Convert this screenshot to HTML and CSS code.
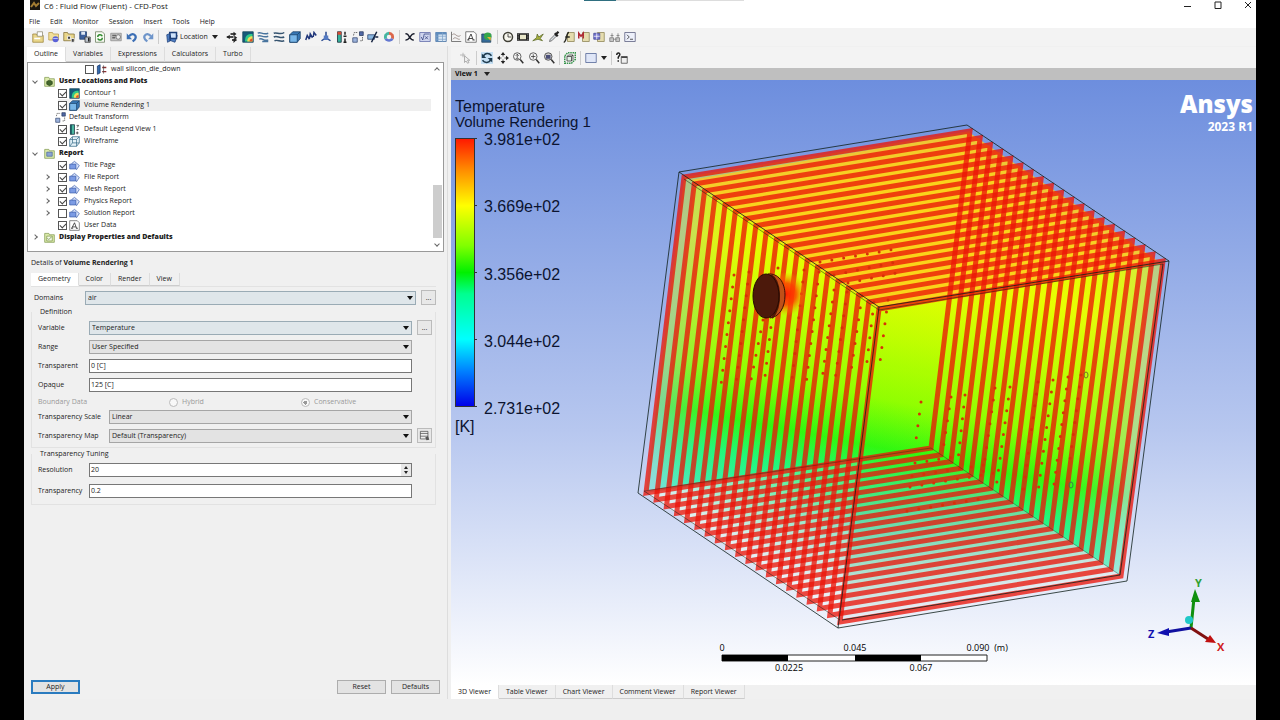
FILE: index.html
```html
<!DOCTYPE html>
<html lang="en">
<head>
<meta charset="utf-8">
<title>C6 : Fluid Flow (Fluent) - CFD-Post</title>
<link rel="stylesheet" href="styles.css">
</head>
<body>
<svg class="sprite" aria-hidden="true">
  <symbol id="i-folder" viewBox="0 0 16 16"><path d="M1 4h5l1 2h8v9H1z" fill="#e9d68a" stroke="#9a8238"/><path d="M7 1h7v6H7z" fill="#fff" stroke="#8d8a70"/><path d="M3 10h8" stroke="#fff" stroke-width="2"/></symbol>
  <symbol id="i-folderball" viewBox="0 0 16 16"><path d="M1 2h5l1 2h7v8H1z" fill="#f2e09a" stroke="#b89a4a"/><circle cx="10" cy="11" r="4" fill="#5a62d8"/><path d="M7 10h6" stroke="#d9dcff"/></symbol>
  <symbol id="i-foldersim" viewBox="0 0 16 16"><path d="M1 2h5l1 2h8v9H1z" fill="#e9d68a" stroke="#7f6d35"/><path d="M6 7h4v4H6zM11 10h4v5h-4z" fill="#444" stroke="#fff"/></symbol>
  <symbol id="i-save" viewBox="0 0 16 16"><path d="M1 1h9v10H1z" fill="#3c5f9c" stroke="#24406e"/><path d="M3 1h5v4H3z" fill="#dfe8f5"/><path d="M8 8h7v7H8z" fill="#bcc3cc" stroke="#333"/><path d="M13 9v5" stroke="#222" stroke-width="2"/></symbol>
  <symbol id="i-refresh" viewBox="0 0 16 16"><path d="M2 1h9l3 3v11H2z" fill="#f7fbf2" stroke="#667a5a"/><path d="M5 8c0-4 5-4 6-1M11 9c0 4-5 4-6 1" fill="none" stroke="#2f8a2f" stroke-width="2"/></symbol>
  <symbol id="i-camera" viewBox="0 0 16 16"><path d="M1 3h14v10H1z" fill="#c4c4c4" stroke="#8b8b8b"/><path d="M3 6h5M3 9h4" stroke="#666" stroke-width="2"/><circle cx="11" cy="8" r="3" fill="#eee" stroke="#666"/></symbol>
  <symbol id="i-undo" viewBox="0 0 16 16"><path d="M4 7c5-6 11-1 8 4l-3 3" fill="none" stroke="#3d6fb5" stroke-width="3"/><path d="M1 3v8h7z" fill="#3d6fb5"/></symbol>
  <symbol id="i-redo" viewBox="0 0 16 16"><path d="M12 7C7 1 1 6 4 11l3 3" fill="none" stroke="#6e95ca" stroke-width="3"/><path d="M15 3v8H8z" fill="#6e95ca"/></symbol>
  <symbol id="i-location" viewBox="0 0 16 16"><path d="M1 5l5-2v10l-4 2zM6 4l9 2-3 9-8-3z" fill="#4f7fc4" stroke="#1d3f78"/><path d="M5 2h9v8H6z" fill="#cfe3fb" stroke="#1d3f78" stroke-width="2"/></symbol>
  <symbol id="i-vector" viewBox="0 0 16 16"><path d="M1 8h9M6 4h5M8 12h6" stroke="#111" stroke-width="2"/><path d="M5 5l-4 3 4 3zM10 1l4 3-4 3zM11 6l4 3-4 3zM10 10l4 2-4 4z" fill="#222"/></symbol>
  <symbol id="i-contour" viewBox="0 0 16 16"><path d="M1 1h14v14H1z" fill="#155b7a" stroke="#124358"/><path d="M4 14c0-8 3-10 10-10v10z" fill="#2fc98a"/><path d="M7 14c0-5 3-7 7-7v7z" fill="#f1dc57"/><path d="M10 14c0-3 2-4 4-4v4z" fill="#e0522c"/></symbol>
  <symbol id="i-stream" viewBox="0 0 16 16"><path d="M1 3c4-3 6 3 14 0M1 7c4-3 6 3 14 0M3 11c4-3 5 3 12 1M7 14h8" fill="none" stroke="#48749e" stroke-width="2"/></symbol>
  <symbol id="i-particle" viewBox="0 0 16 16"><path d="M1 3c4-2 8 3 14-1M1 8c5-3 8 3 14 0M2 13c4-2 8 2 13 0" fill="none" stroke="#35536f" stroke-width="2"/></symbol>
  <symbol id="i-cube" viewBox="0 0 16 16"><path d="M1 5l4-4h10v9l-4 5H1z" fill="#3777b5" stroke="#173d64"/><path d="M1 5h10v10H1z" fill="#78b6e8" stroke="#173d64"/><path d="M11 5l4-4" stroke="#173d64"/></symbol>
  <symbol id="i-text" viewBox="0 0 16 16"><path d="M1 12l2-6 3 5M6 10l1-6 3 5M11 8l1-6 3 4" fill="none" stroke="#20367a" stroke-width="2"/></symbol>
  <symbol id="i-coord" viewBox="0 0 16 16"><path d="M8 1v8l6 4M8 9l-6 4" stroke="#25478e" stroke-width="2" fill="none"/><path d="M5 6h6v6H5z" fill="#547ac2"/></symbol>
  <symbol id="i-legend" viewBox="0 0 16 16"><path d="M2 1h5v14H2z" fill="#35b39c" stroke="#123"/><path d="M2 1h5v4H2z" fill="#d24a35"/><path d="M12 1v4M10 7h4M12 10v5M10 15h4" stroke="#222" stroke-width="2"/></symbol>
  <symbol id="i-legendgreen" viewBox="0 0 16 16"><path d="M2 1h6v14H2z" fill="#49b8a0" stroke="#123"/><path d="M2 1h2v14H2z" fill="#154c58"/><path d="M11 2h3l-2 3M11 8h3M12 11v4M10 13h4" fill="none" stroke="#222"/></symbol>
  <symbol id="i-transform" viewBox="0 0 16 16"><path d="M1 9h6v6H1z" fill="#9db3dc" stroke="#34466f"/><path d="M10 1h5v5h-5z" fill="#5068a5" stroke="#26385e"/><path d="M2 6l1-4h5M14 8v5h-4" fill="none" stroke="#444" stroke-dasharray="2 1"/></symbol>
  <symbol id="i-clip" viewBox="0 0 16 16"><path d="M1 5h9v6H1z" fill="#8ab7df" stroke="#243d6d"/><path d="M13 1L6 15M11 8h4" stroke="#14223f" stroke-width="2"/></symbol>
  <symbol id="i-wheel" viewBox="0 0 16 16"><path d="M8 8V1a7 7 0 0 1 6 10z" fill="#dc674b"/><path d="M8 8l6 3a7 7 0 0 1-12 0z" fill="#6478d1"/><path d="M8 8L2 11A7 7 0 0 1 8 1z" fill="#44b5a0"/><circle cx="8" cy="8" r="3" fill="#f2f2f2"/></symbol>
  <symbol id="i-x" viewBox="0 0 16 16"><path d="M2 4c5-2 5 9 11 8M14 4C9 2 8 13 2 12" fill="none" stroke="#181c2b" stroke-width="2"/></symbol>
  <symbol id="i-fx" viewBox="0 0 16 16"><path d="M1 2h14v12H1z" fill="#cfd5ee" stroke="#5b67a5"/><path d="M3 8l2 4 2-8h7M8 7l4 4M12 7l-4 4" fill="none" stroke="#31407f"/></symbol>
  <symbol id="i-table" viewBox="0 0 16 16"><path d="M1 2h14v12H1z" fill="#d8e7f5" stroke="#3c6a9d"/><path d="M1 3h14M3 2v12" stroke="#5f8cbd" stroke-width="3"/><path d="M1 7h14M1 11h14M10 2v12" stroke="#7fa3c8"/></symbol>
  <symbol id="i-chart" viewBox="0 0 16 16"><path d="M2 1v13h13" fill="none" stroke="#555"/><path d="M3 5c4-4 6 5 11 1M4 11c3-5 6 1 9 0" fill="none" stroke="#8b7a74"/></symbol>
  <symbol id="i-a" viewBox="0 0 16 16"><path d="M1 1h11l3 3v11H1z" fill="#fff" stroke="#555"/><path d="M4 12L8 4l3 8M5 10h5M3 12h3M10 12h3" fill="none" stroke="#111"/></symbol>
  <symbol id="i-figure" viewBox="0 0 16 16"><path d="M1 4h12v11H1z" fill="#356b99" stroke="#23405c"/><circle cx="9" cy="7" r="5" fill="#35a74b"/><path d="M8 8h5v5z" fill="#e1b635"/></symbol>
  <symbol id="i-clock" viewBox="0 0 16 16"><circle cx="8" cy="8" r="6" fill="#f7f6ee" stroke="#403f36" stroke-width="2"/><path d="M8 4v4h4" fill="none" stroke="#222"/></symbol>
  <symbol id="i-film" viewBox="0 0 16 16"><path d="M0 3h16v10H0z" fill="#222"/><path d="M4 5h8v6H4z" fill="#e8e6c9"/><path d="M1 5h1M1 8h1M1 11h1M14 5h1M14 8h1M14 11h1" stroke="#fff"/></symbol>
  <symbol id="i-quick" viewBox="0 0 16 16"><path d="M1 13l5-4 1-5 2 4 6-4-4 6 3 3-6-2z" fill="#a8b13c" stroke="#5c6a2a"/></symbol>
  <symbol id="i-probe" viewBox="0 0 16 16"><path d="M2 14l1-3 6-6 2 2-6 6z" fill="#d6dde2" stroke="#555"/><path d="M9 3l4 4M11 4l3-3" stroke="#222" stroke-width="3"/></symbol>
  <symbol id="i-func" viewBox="0 0 16 16"><path d="M6 2h9v12H6z" fill="#e5dcae" stroke="#8b8150"/><path d="M1 15c4 0 3-13 7-13M3 8h6" fill="none" stroke="#282820" stroke-width="2"/></symbol>
  <symbol id="i-macro" viewBox="0 0 16 16"><path d="M6 2h9v12H6z" fill="#e5dcae" stroke="#8b8150"/><path d="M1 10V3l3 4 3-4v7" fill="none" stroke="#b02b35" stroke-width="2"/></symbol>
  <symbol id="i-mesh" viewBox="0 0 16 16"><path d="M6 2h9v12H6z" fill="#e5dcae" stroke="#8b8150"/><path d="M1 3h8v8H1z" fill="#7273cf" stroke="#414590"/><path d="M1 7h8M5 3v8" stroke="#fff"/></symbol>
  <symbol id="i-compare" viewBox="0 0 16 16"><path d="M1 9h5v5H1zM9 9h5v5H9z" fill="#c7c7c7" stroke="#777"/><path d="M4 9V3M12 9V3M6 11h4M2 6h4M10 6h4" stroke="#777"/></symbol>
  <symbol id="i-console" viewBox="0 0 16 16"><path d="M1 2h14v12H1z" fill="#edf0fa" stroke="#55587a"/><path d="M4 5l3 3-3 3M8 11h4" fill="none" stroke="#222"/></symbol>
  <symbol id="i-select" viewBox="0 0 16 16"><path d="M6 5v9l2-2 2 3 2-1-2-3h3z" fill="#eee" stroke="#999"/><path d="M0 4h7M4 1v6" stroke="#aaa"/></symbol>
  <symbol id="i-rotate" viewBox="0 0 16 16"><path d="M3 6c2-5 8-5 11-1M13 10c-2 5-8 5-11 1" fill="none" stroke="#1e3a4d" stroke-width="2"/><path d="M1 2v6h6zM15 14V8H9z" fill="#1e3a4d"/></symbol>
  <symbol id="i-pan" viewBox="0 0 16 16"><path d="M8 0l3 4H5zM8 16l3-4H5zM0 8l4-3v6zM16 8l-4-3v6z" fill="#222"/><path d="M8 4v2M8 10v2M4 8h2M10 8h2" stroke="#222"/></symbol>
  <symbol id="i-zoom" viewBox="0 0 16 16"><circle cx="7" cy="6" r="5" fill="#f5f5f5" stroke="#333"/><path d="M11 10l4 5" stroke="#333" stroke-width="2"/><path d="M7 3v6M5 5l2-2 2 2M5 8l2 2 2-2" stroke="#333" fill="none"/></symbol>
  <symbol id="i-zoombox" viewBox="0 0 16 16"><circle cx="7" cy="6" r="5" fill="#f5f5f5" stroke="#333"/><path d="M11 10l4 5" stroke="#333" stroke-width="2"/><path d="M7 3v6M4 6h6" stroke="#333"/></symbol>
  <symbol id="i-fit" viewBox="0 0 16 16"><circle cx="7" cy="6" r="5" fill="#ccc" stroke="#333"/><path d="M4 4h6v5H4z" fill="#4b4f78"/><path d="M11 10l4 5" stroke="#333" stroke-width="2"/></symbol>
  <symbol id="i-highlight" viewBox="0 0 16 16"><path d="M1 5l4-4h10v9l-5 5H1z" fill="none" stroke="#35924a" stroke-width="2" stroke-dasharray="2 1"/><path d="M4 6h6v6H4zM4 6l2-2h6v6l-2 2M10 6l2-2" fill="#e4f0e8" stroke="#333"/></symbol>
  <symbol id="i-viewport" viewBox="0 0 16 16"><path d="M1 2h14v12H1z" fill="#dfe6f7" stroke="#4b5f91"/></symbol>
  <symbol id="i-help" viewBox="0 0 16 16"><path d="M1 4c0-4 5-3 4 0L3 7v2M3 11v2" fill="none" stroke="#222" stroke-width="2"/><path d="M7 6h8v9H7z" fill="#eee" stroke="#444"/><path d="M7 7h8" stroke="#444" stroke-width="2"/></symbol>
  <symbol id="i-group" viewBox="0 0 16 16"><path d="M1 2h6l1 2h7v11H1z" fill="#dcebab" stroke="#799346"/><path d="M4 8l4-2 4 2v4l-4 2-4-2z" fill="#43662b" stroke="#26401a"/></symbol>
  <symbol id="i-reportgroup" viewBox="0 0 16 16"><path d="M1 2h6l1 2h7v11H1z" fill="#dcebab" stroke="#799346"/><path d="M4 6h8v6H4z" fill="#8ba4d2" stroke="#4a649b"/></symbol>
  <symbol id="i-displaygroup" viewBox="0 0 16 16"><path d="M1 2h6l1 2h7v11H1z" fill="#dcebab" stroke="#799346"/><path d="M4 6h8v7H4z" fill="#f5fae8" stroke="#799346"/><path d="M5 9l2 2 4-4" fill="none" stroke="#587a34"/></symbol>
  <symbol id="i-wall" viewBox="0 0 16 16"><path d="M2 3l4-2v12l-4 2z" fill="#356cae" stroke="#152f63"/><path d="M9 5h6M9 11h6" stroke="#8d3134" stroke-width="2"/><path d="M11 2v12" stroke="#444"/></symbol>
  <symbol id="i-wire" viewBox="0 0 16 16"><path d="M1 5l4-4h10v9l-4 5H1zM1 5h10v10M11 5l4-4M5 1v9h10M5 10l-4 5" fill="#e4f2f8" stroke="#2c6382"/></symbol>
  <symbol id="i-page" viewBox="0 0 16 16"><path d="M4 5l4-3 7 6-4 6z" fill="#dbe5fb" stroke="#3558a8"/><path d="M1 6h9v7H1z" fill="#7b9be4" stroke="#3558a8"/></symbol>
  <symbol id="i-edit" viewBox="0 0 16 16"><path d="M2 2h11v11H2zM2 5h11M2 9h11" fill="#eee" stroke="#444"/><path d="M9 11l4-2 2 5-4 1z" fill="#555"/></symbol>
</svg>

<div class="app">
  <header class="titlebar">
    <svg class="appicon" viewBox="0 0 10 10"><path d="M0 0h10v10H0z" fill="#1b1710"/><path d="M1 7l3-4 2 3 3-3" fill="none" stroke="#a57e33" stroke-width="2"/></svg>
    <h1 class="title">C6 : Fluid Flow (Fluent) - CFD-Post</h1>
    <span class="progress"></span>
    <div class="winbtns">
      <button aria-label="Minimize"><svg viewBox="0 0 8 8"><path d="M0 5h7v1H0z" fill="#222"/></svg></button>
      <button aria-label="Maximize"><svg viewBox="0 0 16 16"><path d="M2 2h12v13H2z" fill="none" stroke="#222" stroke-width="2"/></svg></button>
      <button aria-label="Close"><svg viewBox="0 0 8 8"><path d="M1 1l6 6M7 1L1 7" stroke="#222"/></svg></button>
    </div>
  </header>
  <nav class="menubar">
    <button>File</button><button>Edit</button><button>Monitor</button><button>Session</button><button>Insert</button><button>Tools</button><button>Help</button>
  </nav>
  <div class="toolbar">
    <div class="tools t-file" data-icons="folder folderball foldersim save refresh camera"></div>
    <div class="tools t-undo" data-icons="undo redo"></div>
    <i class="sep"></i>
    <button class="location"><svg><use href="#i-location"/></svg>Location<i class="tri"></i></button>
    <div class="tools t-plot" data-icons="vector contour stream particle cube"></div>
    <div class="tools t-obj" data-icons="text coord legend transform clip wheel"></div>
    <i class="sep"></i>
    <div class="tools t-calc" data-icons="x fx table chart a figure"></div>
    <i class="sep"></i>
    <div class="tools t-util" data-icons="clock film quick probe func macro mesh compare console"></div>
  </div>

  <main class="work">
    <section class="left">
      <div class="tabs main-tabs" role="tablist">
        <button class="tab on" role="tab">Outline</button><button class="tab" role="tab">Variables</button><button class="tab" role="tab">Expressions</button><button class="tab" role="tab">Calculators</button><button class="tab" role="tab">Turbo</button>
      </div>
      <div class="treebox">
        <ul class="tree">
          <li class="row deep"><label><input type="checkbox"><svg><use href="#i-wall"/></svg>wall silicon_die_down</label></li>
          <li class="row group"><i class="chev open"></i><svg><use href="#i-group"/></svg><b>User Locations and Plots</b></li>
          <li class="row item"><i class="chev none"></i><label><input type="checkbox" checked><svg><use href="#i-contour"/></svg>Contour 1</label></li>
          <li class="row item sel"><i class="chev none"></i><label><input type="checkbox" checked><svg><use href="#i-cube"/></svg>Volume Rendering 1</label></li>
          <li class="row item"><i class="chev none"></i><svg class="bare"><use href="#i-transform"/></svg>Default Transform</li>
          <li class="row item"><i class="chev none"></i><label><input type="checkbox" checked><svg><use href="#i-legendgreen"/></svg>Default Legend View 1</label></li>
          <li class="row item"><i class="chev none"></i><label><input type="checkbox" checked><svg><use href="#i-wire"/></svg>Wireframe</label></li>
          <li class="row group"><i class="chev open"></i><svg><use href="#i-reportgroup"/></svg><b>Report</b></li>
          <li class="row item"><i class="chev none"></i><label><input type="checkbox" checked><svg><use href="#i-page"/></svg>Title Page</label></li>
          <li class="row item"><i class="chev"></i><label><input type="checkbox" checked><svg><use href="#i-page"/></svg>File Report</label></li>
          <li class="row item"><i class="chev"></i><label><input type="checkbox" checked><svg><use href="#i-page"/></svg>Mesh Report</label></li>
          <li class="row item"><i class="chev"></i><label><input type="checkbox" checked><svg><use href="#i-page"/></svg>Physics Report</label></li>
          <li class="row item"><i class="chev"></i><label><input type="checkbox"><svg><use href="#i-page"/></svg>Solution Report</label></li>
          <li class="row item"><i class="chev none"></i><label><input type="checkbox" checked><svg><use href="#i-a"/></svg>User Data</label></li>
          <li class="row group"><i class="chev"></i><svg><use href="#i-displaygroup"/></svg><b>Display Properties and Defaults</b></li>
        </ul>
        <div class="scroll"><i class="chev up"></i><span class="thumb"></span><i class="chev open"></i></div>
      </div>
      <h2 class="details">Details of <b>Volume Rendering 1</b></h2>
      <div class="tabs sub-tabs" role="tablist">
        <button class="tab on" role="tab">Geometry</button><button class="tab" role="tab">Color</button><button class="tab" role="tab">Render</button><button class="tab" role="tab">View</button>
      </div>
      <form class="form">
        <div class="line domains"><label for="domains">Domains</label><span class="pick blue"><select id="domains"><option>air</option></select></span><button type="button" class="more">...</button></div>
        <fieldset class="definition">
          <legend>Definition</legend>
          <div class="line"><label for="variable">Variable</label><span class="pick blue"><select id="variable"><option>Temperature</option></select></span><button type="button" class="more">...</button></div>
          <div class="line"><label for="range">Range</label><span class="pick"><select id="range"><option>User Specified</option></select></span></div>
          <div class="line"><label for="transparent">Transparent</label><input class="text" id="transparent" value="0 [C]"></div>
          <div class="line"><label for="opaque">Opaque</label><input class="text" id="opaque" value="125 [C]"></div>
          <div class="line radios"><span>Boundary Data</span><label><input type="radio" name="bd" disabled>Hybrid</label><label><input type="radio" name="bd" checked disabled>Conservative</label></div>
          <div class="line wide"><label for="scale">Transparency Scale</label><span class="pick"><select id="scale"><option>Linear</option></select></span></div>
          <div class="line wide"><label for="map">Transparency Map</label><span class="pick"><select id="map"><option>Default (Transparency)</option></select></span><button type="button" class="more" aria-label="Edit map"><svg><use href="#i-edit"/></svg></button></div>
        </fieldset>
        <fieldset class="tuning">
          <legend>Transparency Tuning</legend>
          <div class="line"><label for="res">Resolution</label><span class="spin"><input class="text" id="res" value="20"><span class="arrows"><i class="tri flip"></i><i class="tri"></i></span></span></div>
          <div class="line"><label for="transp">Transparency</label><input class="text" id="transp" value="0.2"></div>
        </fieldset>
      </form>
      <div class="actions"><button class="btn primary">Apply</button><span class="gap"></span><button class="btn">Reset</button><button class="btn">Defaults</button></div>
    </section>

    <section class="right">
      <div class="toolbar viewbar">
        <div class="tools t-one" data-icons="select"></div>
        <i class="sep"></i>
        <div class="tools t-nav" data-icons="rotate pan zoom zoombox fit"></div>
        <i class="sep"></i>
        <div class="tools t-one" data-icons="highlight"></div>
        <i class="sep"></i>
        <div class="tools t-one" data-icons="viewport"></div><i class="tri"></i>
        <i class="sep"></i>
        <div class="tools t-one" data-icons="help"></div>
      </div>
      <div class="viewhead"><b>View 1</b><i class="tri"></i></div>
      <div class="viewport">
        <svg class="scene" viewBox="451 80 805 605" font-family="Open Sans, sans-serif">
          <defs>
            <linearGradient id="temp" gradientUnits="userSpaceOnUse" x1="925" y1="280" x2="857" y2="620">
              <stop offset="0" stop-color="#e8ff00"/><stop offset=".18" stop-color="#c0ff00"/><stop offset=".36" stop-color="#90ff00"/><stop offset=".5" stop-color="#30f810"/><stop offset=".6" stop-color="#20f878"/><stop offset=".74" stop-color="#40ecc0"/><stop offset=".88" stop-color="#90e8e0"/><stop offset="1" stop-color="#e4eef4"/>
            </linearGradient>
            <linearGradient id="floor" gradientUnits="userSpaceOnUse" x1="890" y1="450" x2="915" y2="610">
              <stop offset="0" stop-color="#50f000" stop-opacity="0"/><stop offset=".4" stop-color="#7ccfa0" stop-opacity=".6"/><stop offset="1" stop-color="#e8ecf6"/>
            </linearGradient>
            <linearGradient id="corner" gradientUnits="userSpaceOnUse" x1="750" y1="557" x2="800" y2="470">
              <stop offset="0" stop-color="#f0f2fa" stop-opacity=".9"/><stop offset="1" stop-color="#c8f0e4" stop-opacity=".2"/>
            </linearGradient>
            <radialGradient id="heat"><stop offset="0" stop-color="#ff2000"/><stop offset=".5" stop-color="#ff4000" stop-opacity=".85"/><stop offset="1" stop-color="#ffa000" stop-opacity="0"/></radialGradient>
          </defs>
          <g id="fills"></g>
          <polygon points="690,180 970,133 1158,261 879,309" fill="#ffc820" opacity=".8"/>
          <polygon points="646,493 931,448 1121,576 840,622" fill="url(#floor)"/>
          <polygon points="646,493 860,459 840,622" fill="url(#corner)"/>
          <g id="edges" fill="none" stroke="#ec1408" stroke-width="5" stroke-opacity=".77"></g>
          <g id="dots" fill="none" stroke="#d83008" stroke-width="3" stroke-linecap="round" stroke-dasharray="0 12"></g>
          <g fill="none" stroke="#10201c">
            <path d="M679 172L967 125L1169 261L1127 581L838 628L638 493Z" stroke-opacity=".8"/>
            <path d="M679 172L879 307L1169 261M879 307L838 628M1163 264L1120 575M842 620L1120 575" stroke-opacity=".8"/>
            <path d="M684 179L879 310L1163 264M644 491L840 620" stroke-opacity=".5"/>
            <path d="M644 491L931 448L1120 575" stroke-opacity=".35"/>
            <ellipse cx="1086" cy="375" rx="2" ry="3" stroke="#79702c"/><ellipse cx="1071" cy="485" rx="2" ry="3" stroke="#3b7c52"/>
          </g>
          <ellipse cx="786" cy="294" rx="20" ry="22" fill="url(#heat)"/>
          <path d="M768 274c10-1 17 8 17 21s-6 22-15 23z" fill="#c05018" stroke="#3a1006"/>
          <path d="M771 275c9 5 12 30 1 43" fill="none" stroke="#511808" stroke-width="2"/>
          <ellipse cx="766" cy="296" rx="13" ry="22" fill="#4c190b" stroke="#250a03"/>
          <path d="M474 138.500h3M474 205.500h3M474 272.500h3M474 339.500h3M474 406.500h3" stroke="#333"/>
          <g class="ruler">
            <path d="M722 655h265v6H722z" fill="#fff" stroke="#222"/><path d="M722 655h66v6h-66zM855 655h66v6h-66z"/>
            <g font-size="9" text-anchor="middle"><text x="722" y="651">0</text><text x="855" y="651">0.045</text><text x="978" y="651">0.090</text><text x="1001" y="651">(m)</text><text x="789" y="671">0.0225</text><text x="921" y="671">0.067</text></g>
          </g>
          <path d="M1191 628L1194 598" stroke="#109010" stroke-width="3"/><path d="M1195 589l5 13h-9z" fill="#109010"/>
          <path d="M1191 628L1166 632" stroke="#1010a0" stroke-width="3"/><path d="M1157 633l12-5v8z" fill="#1010b0"/>
          <path d="M1191 628L1208 639" stroke="#801010" stroke-width="3"/><path d="M1216 643l-11-1 5-7z" fill="#c01010"/>
          <circle cx="1189" cy="620" r="4" fill="#20c8c8"/>
          <g font-size="11" font-weight="700"><text x="1195" y="587" fill="#30a030">Y</text><text x="1148" y="638" fill="#1010b0">Z</text><text x="1217" y="651" fill="#d02020">X</text></g>
        </svg>
        <div class="legend">
          <div class="lt">Temperature</div><div class="ls">Volume Rendering 1</div>
          <div class="scale"><span class="bar"></span><span class="vals"><span>3.981e+02</span><span>3.669e+02</span><span>3.356e+02</span><span>3.044e+02</span><span>2.731e+02</span></span></div>
          <div class="unit">[K]</div>
        </div>
        <div class="brand"><strong>Ansys</strong><span>2023 R1</span></div>
      </div>
      <div class="tabs view-tabs" role="tablist">
        <button class="tab on" role="tab">3D Viewer</button><button class="tab" role="tab">Table Viewer</button><button class="tab" role="tab">Chart Viewer</button><button class="tab" role="tab">Comment Viewer</button><button class="tab" role="tab">Report Viewer</button>
      </div>
    </section>
  </main>
  <footer class="status"></footer>
</div>
<script src="script.js"></script>
</body>
</html>
```
FILE: styles.css
```css
* { box-sizing: border-box; }
body { margin: 0; padding: 0 24px; background: #000; color: #222; font: 7px/12px "Open Sans", "Noto Sans", sans-serif; }
button, input, select { font: inherit; color: inherit; margin: 0; padding: 0; border: 0; background: none; }
svg { display: block; flex: none; }
.sprite { position: absolute; width: 0; height: 0; }
.app { min-height: 100vh; display: flex; flex-direction: column; background: #f0f0f0; }

.titlebar { display: flex; align-items: flex-start; height: 16px; padding-left: 6px; gap: 4px; background: #fff; }
.appicon { width: 10px; height: 10px; }
.title { margin: 0; font-size: 8px; line-height: 11px; font-weight: 400; width: 536px; }
.progress { width: 160px; height: 1px; background: linear-gradient(90deg, #2f6f80 20%, #ddd 20%); }
.winbtns { display: flex; gap: 22px; margin-left: auto; padding: 1px 4px 0 0; }
.winbtns button, .winbtns svg { width: 8px; height: 8px; }
.menubar { display: flex; gap: 10px; padding: 0 5px; background: #fff; height: 12px; }

.toolbar { display: flex; align-items: center; gap: 4px; height: 18px; padding-left: 8px; background: #f3f3f3; }
.tools { display: flex; justify-content: space-between; }
.tools button { display: block; }
.tools svg, .location svg { width: 12px; height: 12px; }
.sep { width: 1px; height: 14px; background: #ccc; }
.tri { border: 3px solid transparent; border-top: 4px solid #222; border-bottom: 0; width: 0; height: 0; }
.tri.flip { transform: rotate(180deg); }
.location { display: flex; align-items: center; gap: 2px; margin: 0 4px 0 3px; }
.location .tri { margin-left: 2px; }
.t-file { width: 90px; }
.t-undo { width: 28px; }
.t-plot { width: 75px; }
.t-obj { width: 90px; }
.t-calc { width: 89px; }
.t-util { width: 134px; }

.work { display: flex; }
.left { display: flex; flex-direction: column; width: 35%; max-width: 424px; padding: 0 3px; border-right: 1px solid #ddd; }
.tabs { display: flex; }
.tab { padding: 0 7px; border-right: 1px solid #ddd; border-bottom: 1px solid #ccc; background: #f0f0f0; }
.tab.on { background: #fff; border-bottom-color: #fff; }
.main-tabs { padding-top: 1px; }
.main-tabs .tab { height: 15px; }
.treebox { display: flex; border: 1px solid #999; background: #fff; }
.tree { flex: 1; margin: 0; padding: 0 0 8px; list-style: none; }
.row, .row label { display: flex; align-items: center; height: 12px; }
.row { padding-left: 3px; }
.row.item { padding-left: 17px; }
.row.deep { padding-left: 57px; }
.row svg { width: 11px; height: 11px; margin: 0 4px 0 2px; }
.row.group svg { margin: 0 4px 0 4px; }
.row svg.bare { margin: 0 3px 0 2px; }
.row.group { font-weight: 700; }
.sel { background: linear-gradient(90deg, #fff 30px, #efefef 30px); }
.chev { flex: none; width: 4px; height: 4px; margin: 0 3px; border: solid #666; border-width: 1px 1px 0 0; transform: rotate(45deg); }
.chev.open { transform: rotate(135deg); }
.chev.up { transform: rotate(-45deg); }
.chev.none { visibility: hidden; }
.row.group .chev { margin-left: 2px; }
.row.item .chev { margin: 0 4px 0 0; }
.row.item .chev + label { margin-left: 5px; }
input[type=checkbox] { appearance: none; flex: none; display: grid; place-items: center; width: 9px; height: 9px; border: 1px solid #555; background: #fff; }
input[type=checkbox]:checked::before { content: ""; width: 5px; height: 3px; border: solid #444; border-width: 0 0 1px 1px; transform: rotate(-45deg); }
.scroll { display: flex; flex-direction: column; justify-content: space-between; align-items: center; width: 12px; padding: 5px 0; }
.thumb { width: 9px; height: 53px; margin: auto 0 4px; background: #cdcdcd; }

.details { margin: 0; padding: 5px 4px 4px; font-size: 7px; line-height: 12px; font-weight: 400; }
.sub-tabs { padding-left: 4px; }
.sub-tabs .tab { height: 13px; }
.form { flex: 1; margin: 0 8px 0 4px; border-top: 1px solid #e2e2e2; padding-top: 3px; }
.line { display: grid; grid-template-columns: 46px 1fr 15px; column-gap: 5px; align-items: center; height: 15px; margin-bottom: 4px; }
.line.domains { padding-left: 3px; margin-bottom: 0; }
.line.wide { grid-template-columns: 66px 1fr 15px; }
.line > label { white-space: nowrap; }
fieldset { min-width: 0; margin: 0; border: 1px solid #e2e2e2; border-top: 0; padding: 2px 3px 0 6px; }
legend { padding: 0 2px; line-height: 13px; height: 13px; }
.pick { position: relative; display: block; }
.pick select { display: block; appearance: none; width: 100%; height: 14px; padding: 0 2px; border: 1px solid #a5a5a5; background: #e3e3e3; }
.pick.blue select { background: #dfe6ea; border-color: #9aabb5; }
.pick::after { content: ""; position: absolute; right: 3px; top: 5px; border: 3px solid transparent; border-top: 4px solid #111; border-bottom: 0; }
.more { width: 15px; height: 15px; border: 1px solid #bbb; background: #e8e8e8; line-height: 9px; display: grid; place-items: center; }
.more svg { width: 11px; height: 11px; }
.text { width: 100%; height: 14px; padding: 0 1px; border: 1px solid #777; background: #fff; }
.line.radios { grid-template-columns: 126px 127px 1fr; height: 10px; margin-bottom: 3px; color: #999; }
.radios label { display: flex; align-items: center; gap: 4px; }
.radios input { appearance: none; width: 9px; height: 9px; border: 1px solid #bbb; border-radius: 50%; background: #f8f8f8; }
.radios input:checked { background: radial-gradient(#999 2px, #f8f8f8 2px); }
.tuning { padding-top: 2px; }
.tuning .line { margin-bottom: 6px; }
.tuning legend { height: 12px; line-height: 12px; }
.spin { display: flex; position: relative; }
.arrows { position: absolute; right: 1px; top: 1px; width: 10px; height: 12px; display: flex; flex-direction: column; align-items: center; justify-content: center; gap: 2px; background: #e8e8e8; }
.arrows .tri { border-width: 3px 2px 0; }
.actions { display: flex; gap: 5px; padding: 0 4px 5px; }
.actions .gap { flex: 1; }
.btn { width: 49px; height: 14px; border: 1px solid #adadad; background: #e3e3e3; }
.btn.primary { border: 2px solid #2a7bbf; line-height: 10px; }

.right { display: flex; flex-direction: column; flex: 1; min-width: 0; padding-left: 3px; }
.viewbar { height: 21px; margin: 1px 0 0; padding-left: 9px; }
.t-nav { width: 74px; }
.t-nav button:first-child { background: #c5dff3; }
.viewhead { display: flex; align-items: center; gap: 6px; height: 12px; padding-left: 4px; background: #bfbfbf; color: #111; }
.viewport { position: relative; background: linear-gradient(#6d8ede, #b7c7ef 58%, #fff); overflow: hidden; }
.scene { width: 100%; height: auto; }
.legend { position: absolute; left: 4px; top: 19px; color: #0c1430; font-family: "Liberation Sans", Arial, sans-serif; }
.lt { font-size: 16px; line-height: 16px; }
.ls { font-size: 15px; line-height: 14px; }
.scale { display: flex; gap: 9px; margin-top: 9px; height: 269px; }
.bar { width: 20px; border: 1px solid #333; background: linear-gradient(#ff1a00, #ff9000 12%, #ffff00 25%, #80ff00 40%, #00f000 50%, #00ff90 58%, #00ffff 75%, #0080ff 87%, #0000e8); }
.vals { display: flex; flex-direction: column; justify-content: space-between; margin: -6px 0 -10px; font-size: 16px; line-height: 16px; }
.unit { font-size: 16px; line-height: 16px; margin-top: 12px; }
.brand { position: absolute; right: 3px; top: 7px; display: flex; flex-direction: column; align-items: flex-end; color: #fff; font-weight: 700; font-size: 12px; line-height: 14px; }
.brand strong { font-size: 24px; line-height: 33px; }
.view-tabs .tab { height: 14px; line-height: 13px; }
.status { flex: 1; min-height: 20px; background: #efefef; }
```
FILE: script.js
```js
const NS = "http://www.w3.org/2000/svg";

document.querySelectorAll("[data-icons]").forEach((group) => {
  group.dataset.icons.split(" ").forEach((name) => {
    const button = document.createElement("button");
    button.setAttribute("aria-label", name);
    button.innerHTML = `<svg><use href="#i-${name}"/></svg>`;
    group.append(button);
  });
});

function add(parent, tag, attrs) {
  const el = document.createElementNS(NS, tag);
  for (const key in attrs) el.setAttribute(key, attrs[key]);
  document.getElementById(parent).append(el);
}

// Volume slices, interpolated from the back plane to the front plane.
const back = [[684, 177], [970, 131], [931, 448], [646, 493]];
const front = [[879, 309], [1163, 261], [1121, 576], [840, 622]];
const count = 20;
for (let k = 0; k < count; k++) {
  const t = k / (count - 1);
  const points = back
    .map((p, i) => [p[0] + (front[i][0] - p[0]) * t, p[1] + (front[i][1] - p[1]) * t].join(","))
    .join(" ");
  add("fills", "polygon", { points, fill: "url(#temp)", opacity: 0.42 });
  add("edges", "polygon", { points });
}

// Hole rows on each wall.
const rows = [
  "M734 275L721 385", "M749 272L736 385", "M763 320L750 385", "M778 268L764 385", "M804 270L792 380",
  "M819 272L806 385", "M834 290L822 380", "M847 292L835 380", "M862 296L850 378", "M874 302L866 370", "M888 300L880 362",
  "M921 402L916 440", "M951 397L943 450", "M965 395L958 460", "M995 388L982 480", "M1010 387L996 488",
  "M1038 382L1023 492", "M1053 380L1038 492", "M1068 377L1054 485", "M1081 375L1070 460",
  "M915 463L960 456", "M910 487L1000 472", "M907 511L985 498", "M912 476L990 464",
  "M820 262L896 249", "M834 275L896 262", "M848 283L896 273"
];
rows.forEach((d) => add("dots", "path", { d }));
```
